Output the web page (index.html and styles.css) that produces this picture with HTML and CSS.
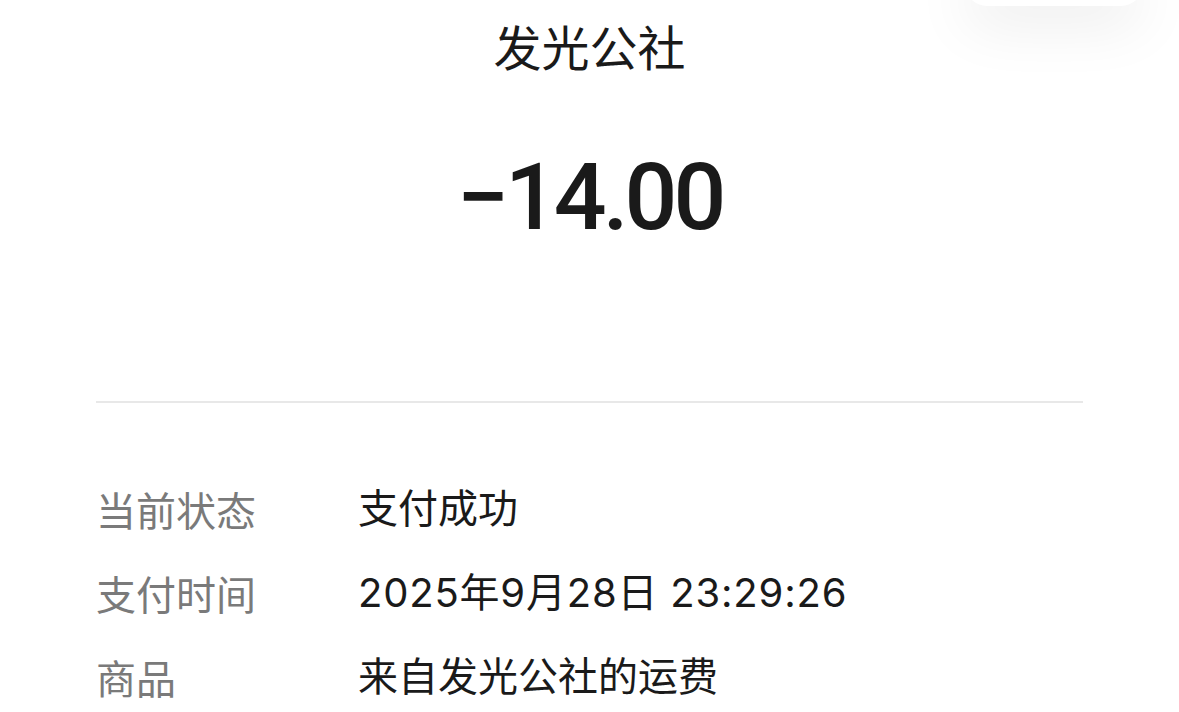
FILE: index.html
```html
<!DOCTYPE html>
<html lang="zh-CN">
<head>
  <meta charset="UTF-8">
  <title>账单详情</title>
  <link rel="stylesheet" href="styles.css">
</head>
<body>
  <div class="float-pill"></div>

  <div class="head">
    <h1 class="title">发光公社</h1>
    <div class="amount">−14.00</div>
  </div>

  <div class="detail">
    <div class="row">
      <span class="label">当前状态</span>
      <span class="value">支付成功</span>
    </div>
    <div class="row">
      <span class="label">支付时间</span>
      <span class="value num">2025年9月28日 23:29:26</span>
    </div>
    <div class="row">
      <span class="label">商品</span>
      <span class="value">来自发光公社的运费</span>
    </div>
  </div>
</body>
</html>
```

FILE: styles.css
```css
:root {
  --text: #1a1a1a;
  --muted: #7a7a7a;
  --line: #e8e8e8;
  --side: 96px;
}
* { box-sizing: border-box; margin: 0; padding: 0 }
html, body { height: 100%; overflow: hidden }
body {
  font-family: Inter, "Noto Sans CJK SC", sans-serif;
  background: #fff;
  color: var(--text);
  position: relative;
}
.float-pill {
  position: absolute; top: -40px; right: 36px;
  width: 178px; height: 46px;
  background: #fff; border-radius: 22px;
  box-shadow: 0 18px 60px rgba(0,0,0,0.08);
}
.head {
  text-align: center;
  padding: 0 var(--side);
}
.title {
  font-family: "Noto Sans CJK SC", sans-serif;
  font-size: 48px; font-weight: 400;
  line-height: 100px; height: 100px;
  margin-top: -5px;
}
.amount {
  font-family: Roboto, sans-serif;
  font-size: 93px; font-weight: 500;
  line-height: 120px;
  margin-top: 43px;
  letter-spacing: -4px;
}
.detail {
  margin: 143px var(--side) 0;
  border-top: 2px solid var(--line);
  padding-top: 64px;
}
.row {
  display: flex;
  font-size: 40px;
  line-height: 84px;
}
.label {
  width: 262px;
  color: var(--muted);
  font-family: "Noto Sans CJK SC", sans-serif;
}
.value { color: var(--text) }
.num { letter-spacing: 0.8px }
```
